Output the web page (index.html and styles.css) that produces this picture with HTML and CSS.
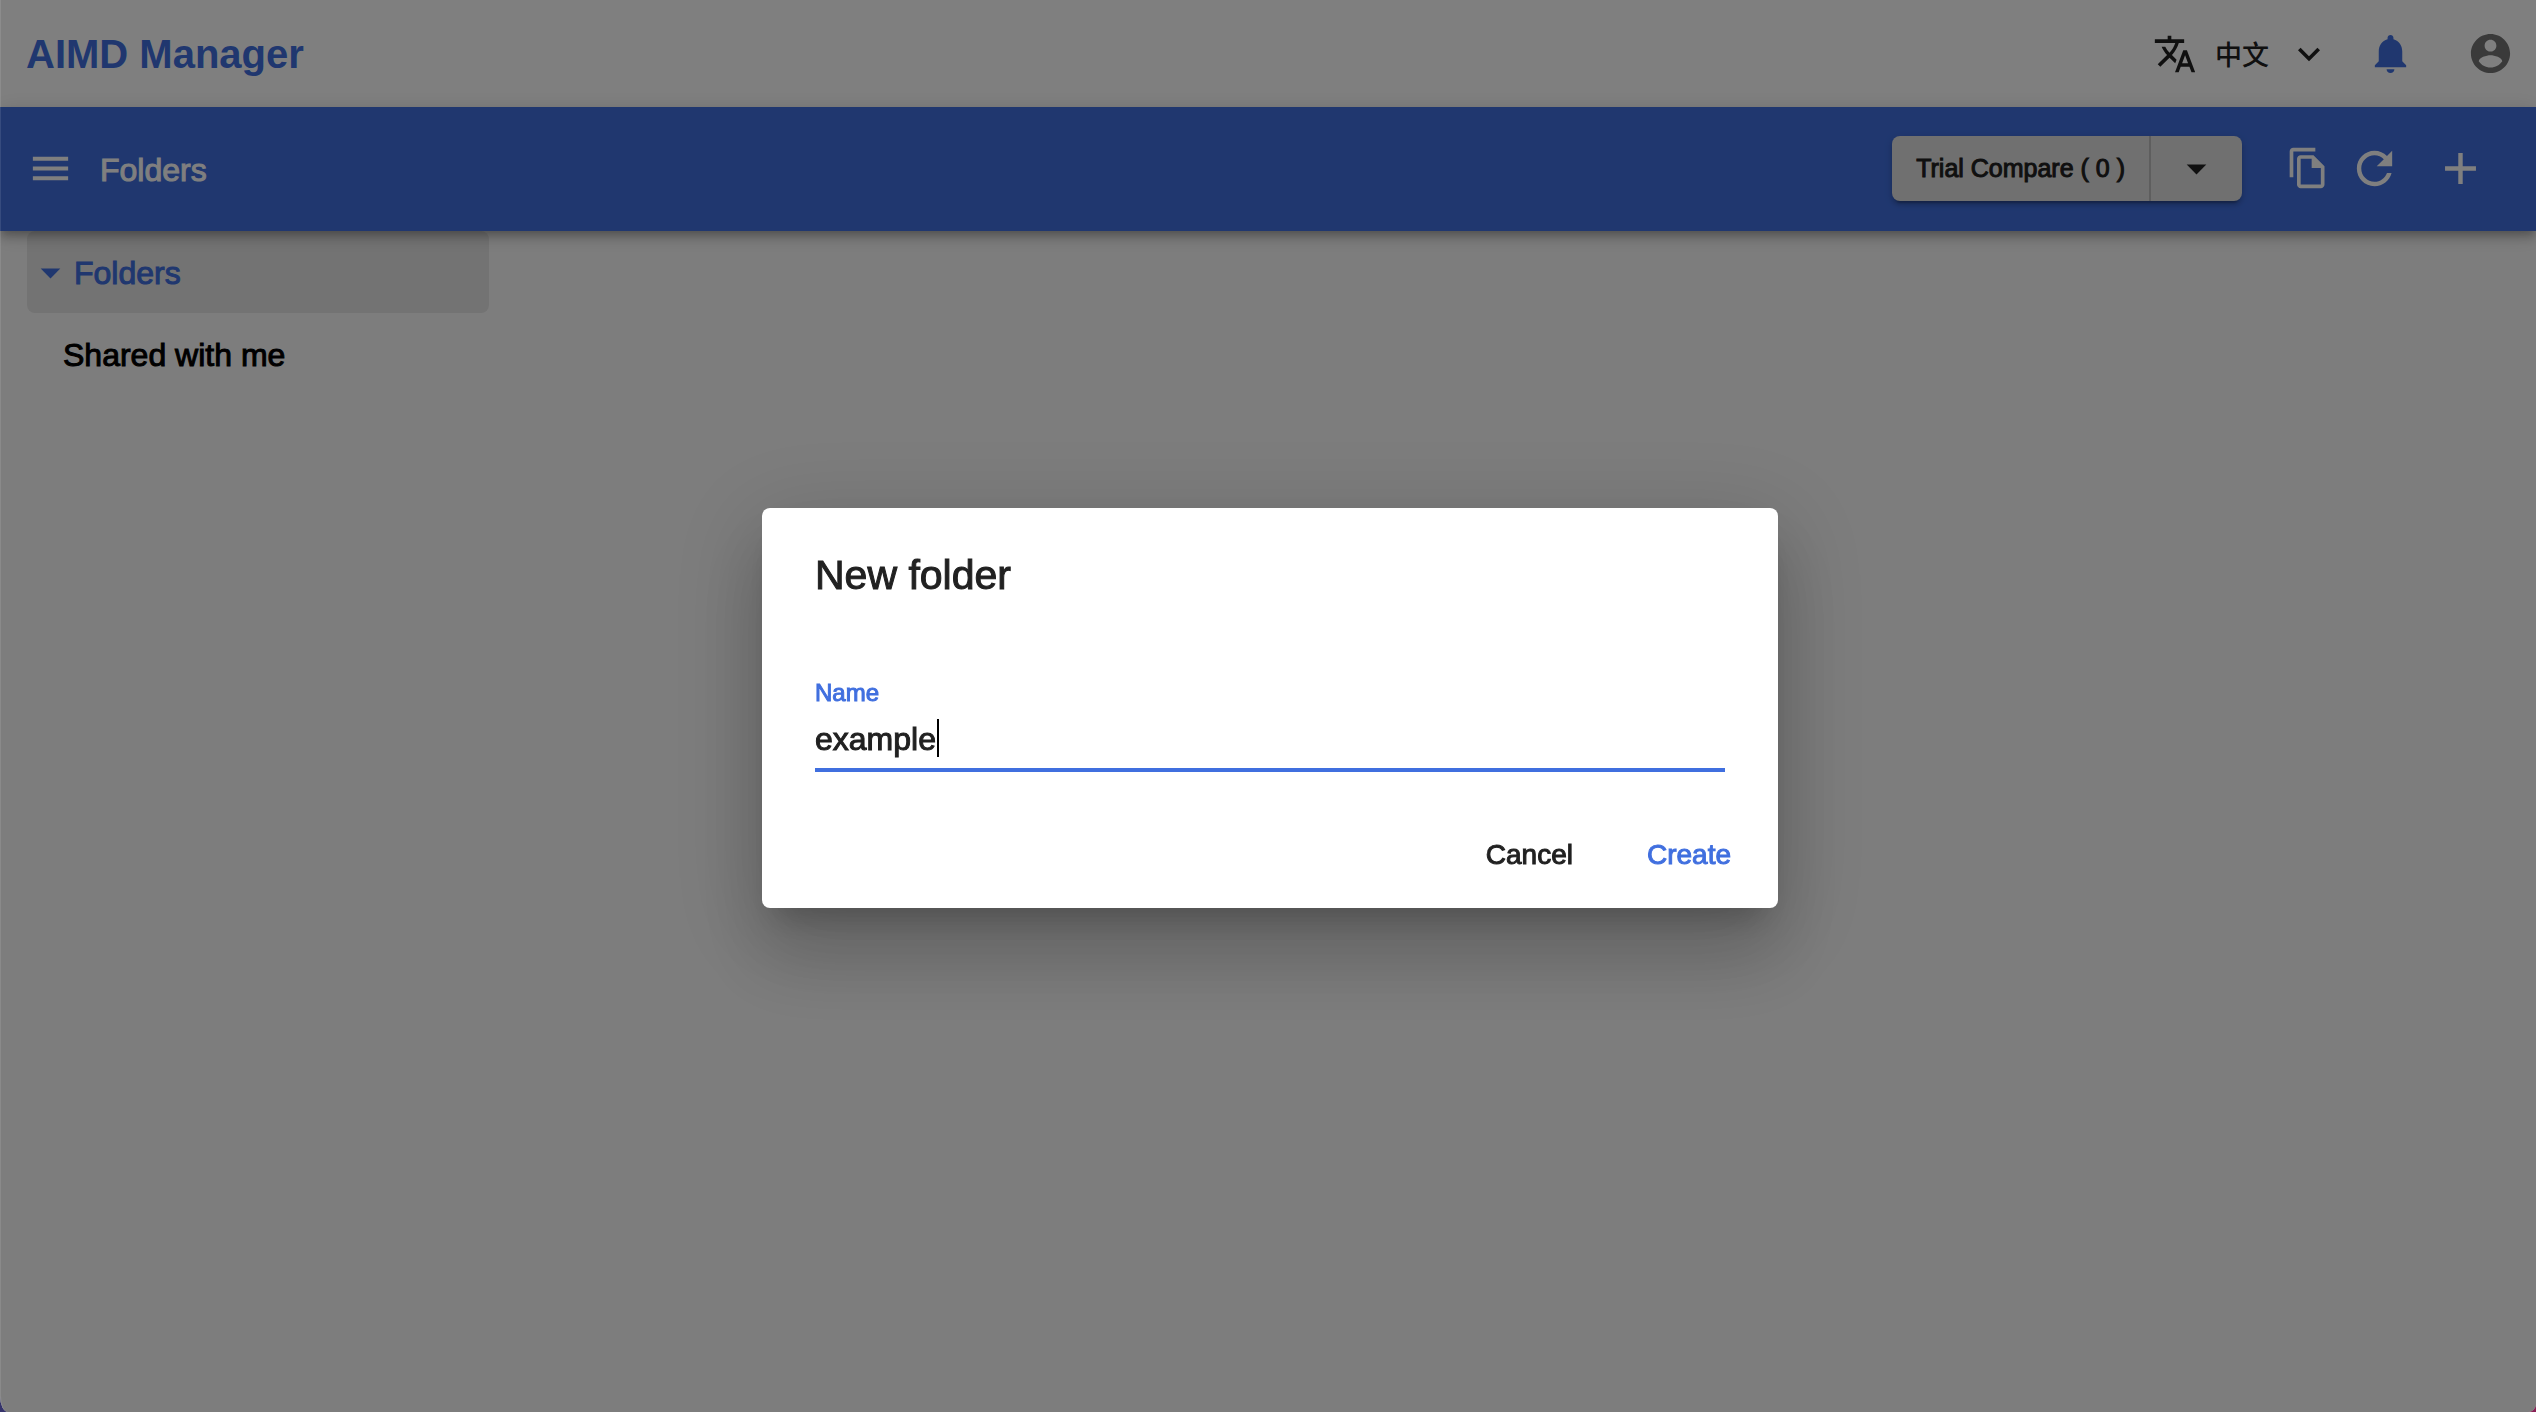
FILE: index.html
```html
<!DOCTYPE html>
<html lang="en">
<head>
<meta charset="utf-8">
<title>AIMD Manager</title>
<link rel="stylesheet" href="styles.css">
</head>
<body>
<div class="app">
  <header class="header">
    <h1 class="brand">AIMD Manager</h1>
    <div class="header-tools">
      <button class="plain language" type="button">
        <svg class="icon icon-md" viewBox="0 0 24 24"><path d="M12.87 15.07l-2.54-2.51.03-.03c1.74-1.94 2.98-4.17 3.71-6.53H17V4h-7V2H8v2H1v1.99h11.17C11.5 7.92 10.44 9.75 9 11.35 8.07 10.32 7.3 9.19 6.69 8h-2c.73 1.63 1.73 3.17 2.98 4.56l-5.09 5.02L4 19l5-5 3.11 3.11.76-2.04zM18.5 10h-2L12 22h2l1.12-3h4.75L21 22h2l-4.5-12zm-2.62 7l1.62-4.33L19.12 17h-3.24z"/></svg>
        <span lang="zh">中文</span>
        <svg class="icon icon-md" viewBox="0 0 24 24"><path d="M7.41 8.59 12 13.17l4.59-4.58L18 10l-6 6-6-6 1.41-1.41z"/></svg>
      </button>
      <button class="plain bell" type="button" aria-label="Notifications">
        <svg class="icon" viewBox="0 0 24 24"><path d="M12 22c1.1 0 2-.9 2-2h-4c0 1.1.89 2 2 2zm6-6v-5c0-3.07-1.64-5.64-4.5-6.32V4c0-.83-.67-1.5-1.5-1.5s-1.5.67-1.5 1.5v.68C7.63 5.36 6 7.92 6 11v5l-2 2v1h16v-1l-2-2z"/></svg>
      </button>
      <button class="plain account" type="button" aria-label="Account">
        <svg class="icon" viewBox="0 0 24 24"><path d="M12 2C6.48 2 2 6.48 2 12s4.48 10 10 10 10-4.48 10-10S17.52 2 12 2zm0 3c1.66 0 3 1.34 3 3s-1.34 3-3 3-3-1.34-3-3 1.34-3 3-3zm0 14.2c-2.5 0-4.71-1.28-6-3.22.03-1.99 4-3.08 6-3.08 1.99 0 5.97 1.09 6 3.08-1.29 1.94-3.5 3.22-6 3.22z"/></svg>
      </button>
    </div>
  </header>

  <div class="toolbar">
    <button class="plain" type="button" aria-label="Menu">
      <svg class="icon" viewBox="0 0 24 24"><path d="M3 18h18v-2H3v2zm0-5h18v-2H3v2zm0-7v2h18V6H3z"/></svg>
    </button>
    <h2 class="toolbar-title">Folders</h2>
    <div class="split-button">
      <button class="split-main" type="button">Trial Compare ( 0 )</button>
      <button class="split-more" type="button" aria-label="Compare options">
        <svg class="icon" viewBox="0 0 24 24"><path d="M7 10l5 5 5-5z"/></svg>
      </button>
    </div>
    <div class="toolbar-actions">
      <button class="plain" type="button" aria-label="Copy">
        <svg class="icon icon-md" viewBox="0 0 24 24"><path d="M16 1H4c-1.1 0-2 .9-2 2v14h2V3h12V1zm-1 4H8c-1.1 0-1.99.9-1.99 2L6 21c0 1.1.89 2 1.99 2H19c1.1 0 2-.9 2-2V11l-6-6zM8 21V7h6v5h5v9H8z"/></svg>
      </button>
      <button class="plain" type="button" aria-label="Refresh">
        <svg class="icon icon-lg" viewBox="0 0 24 24"><path d="M17.65 6.35C16.2 4.9 14.21 4 12 4c-4.42 0-7.99 3.58-7.99 8s3.57 8 7.99 8c3.73 0 6.84-2.55 7.73-6h-2.08c-.82 2.33-3.04 4-5.65 4-3.31 0-6-2.69-6-6s2.69-6 6-6c1.66 0 3.14.69 4.22 1.78L13 11h7V4l-2.35 2.35z"/></svg>
      </button>
    </div>
    <button class="plain" type="button" aria-label="Add">
      <svg class="icon icon-lg" viewBox="0 0 24 24"><path d="M19 13h-6v6h-2v-6H5v-2h6V5h2v6h6v2z"/></svg>
    </button>
  </div>

  <main class="content">
    <nav class="sidebar" aria-label="Folder tree">
      <a class="tree-item tree-item-active" href="#folders">
        <svg class="icon" viewBox="0 0 24 24"><path d="M7 10l5 5 5-5z"/></svg>
        <span class="tree-label">Folders</span>
      </a>
      <a class="tree-item tree-item-child" href="#shared"><span class="tree-label">Shared with me</span></a>
    </nav>
  </main>
</div>

<div class="overlay">
  <form class="dialog" role="dialog" aria-labelledby="dialog-title">
    <h2 class="dialog-title" id="dialog-title">New folder</h2>
    <div class="field">
      <label class="field-label" for="folder-name">Name</label>
      <div class="field-control">
        <input class="field-input" id="folder-name" type="text" value="example">
        <span class="caret"></span>
      </div>
    </div>
    <div class="dialog-actions">
      <button class="text-button" type="button">Cancel</button>
      <button class="text-button text-button-primary" type="button">Create</button>
    </div>
  </form>
</div>
</body>
</html>
```
FILE: styles.css
```css
:root {
  --primary: #406fdf;
  --text: #212121;
  --corners: 0 0 8px 8px / 0 0 8px 16px;
}

* {
  box-sizing: border-box;
}

html {
  background: linear-gradient(90deg, #35336b, #8a2055);
}

body {
  margin: 0;
  color: var(--text);
  font-family: "Liberation Sans", Arial, "Noto Sans CJK SC", sans-serif;
  font-size: 32px;
}

h1,
h2 {
  margin: 0;
}

button,
input {
  font: inherit;
  color: inherit;
}

button {
  border: 0;
  cursor: pointer;
}

/* Liberation Sans has no medium cut; a hairline stroke thickens the regular one. */
.toolbar-title,
.split-main,
.tree-label,
.dialog-title,
.field-label,
.field-input,
.text-button {
  -webkit-text-stroke: 1px currentColor;
}

.app {
  display: flex;
  flex-direction: column;
  min-height: 100vh;
  background: #fafafa;
  border-radius: var(--corners);
}

.plain {
  display: flex;
  align-items: center;
  padding: 0;
  background: none;
}

.icon {
  display: block;
  flex: none;
  width: 47px;
  height: 47px;
  fill: currentColor;
}

.icon-md {
  width: 44px;
  height: 44px;
}

.icon-lg {
  width: 53px;
  height: 53px;
}

/* Header */
.header {
  display: flex;
  align-items: center;
  justify-content: space-between;
  height: 107px;
  padding: 0 22px 0 26px;
  background: #fff;
}

.brand {
  padding-top: 2px;
  color: var(--primary);
  font-size: 40px;
  font-weight: 700;
}

.header-tools {
  display: flex;
  align-items: center;
}

.language {
  gap: 18px;
  margin-right: 36px;
  font-family: "Noto Sans CJK SC", sans-serif;
  font-size: 27px;
  font-weight: 500;
}

.bell {
  margin-right: 53px;
  color: var(--primary);
}

.account {
  color: #757575;
}

/* Toolbar */
.toolbar {
  position: relative;
  display: flex;
  align-items: center;
  height: 124px;
  padding: 0 49px 2px 27px;
  background: var(--primary);
  color: #fff;
  box-shadow: 0 4px 8px -2px rgba(0, 0, 0, 0.2), 0 8px 10px rgba(0, 0, 0, 0.14), 0 2px 20px rgba(0, 0, 0, 0.12);
}

.toolbar-title {
  flex: 1;
  margin-left: 26px;
  padding-top: 4px;
  font-size: 32px;
  font-weight: 400;
}

.split-button {
  display: flex;
  height: 65px;
  margin-right: 44px;
  border-radius: 8px;
  background: #e0e0e0;
  color: var(--text);
  box-shadow: 0 6px 2px -4px rgba(0, 0, 0, 0.2), 0 4px 4px rgba(0, 0, 0, 0.14), 0 2px 10px rgba(0, 0, 0, 0.12);
}

.split-main {
  padding: 0 24px;
  border-right: 2px solid #bdbdbd;
  background: none;
  font-size: 25px;
}

.split-more {
  padding: 0 22px;
  background: none;
}

.toolbar-actions {
  display: flex;
  align-items: center;
  gap: 18px;
  margin-right: 33px;
}

/* Folder tree */
.content {
  flex: 1;
}

.sidebar {
  width: 489px;
  padding-left: 27px;
}

.tree-item {
  display: flex;
  align-items: center;
  height: 82px;
  border-radius: 8px;
  color: #000;
  text-decoration: none;
}

.tree-label {
  padding-top: 2px;
}

.tree-item-active {
  background: #e6e6e6;
  color: var(--primary);
}

.tree-item-child {
  padding-left: 36px;
}

/* Modal dialog */
.overlay {
  position: fixed;
  inset: 0;
  display: flex;
  align-items: center;
  justify-content: center;
  padding: 4px 0 0 3px;
  border-left: 1px solid rgba(255, 255, 255, 0.1);
  border-radius: var(--corners);
  background: rgba(0, 0, 0, 0.5);
}

.dialog {
  width: 1016px;
  max-width: 90%;
  border-radius: 8px;
  background: #fff;
  box-shadow: 0 22px 30px -14px rgba(0, 0, 0, 0.2), 0 48px 76px 6px rgba(0, 0, 0, 0.14), 0 18px 92px 16px rgba(0, 0, 0, 0.12);
}

.dialog-title {
  padding: 36px 53px;
  font-size: 41px;
  font-weight: 400;
  line-height: 62px;
}

.field {
  padding: 39px 53px 49px;
}

.field-label {
  display: block;
  margin-bottom: 5px;
  color: var(--primary);
  font-size: 24px;
  line-height: 24px;
}

.field-control {
  position: relative;
}

.field-input {
  display: block;
  width: 100%;
  height: 62px;
  padding: 0;
  border: 0;
  border-bottom: 4px solid var(--primary);
  outline: 0;
  background: none;
}

.caret {
  position: absolute;
  top: 9px;
  left: 122px;
  width: 2px;
  height: 38px;
  background: #000;
}

.dialog-actions {
  display: flex;
  justify-content: flex-end;
  gap: 18px;
  padding: 0 19px 21px;
}

.text-button {
  height: 66px;
  padding: 1px 28px 0;
  border-radius: 8px;
  background: none;
  font-size: 28px;
}

.text-button-primary {
  color: var(--primary);
}
```
